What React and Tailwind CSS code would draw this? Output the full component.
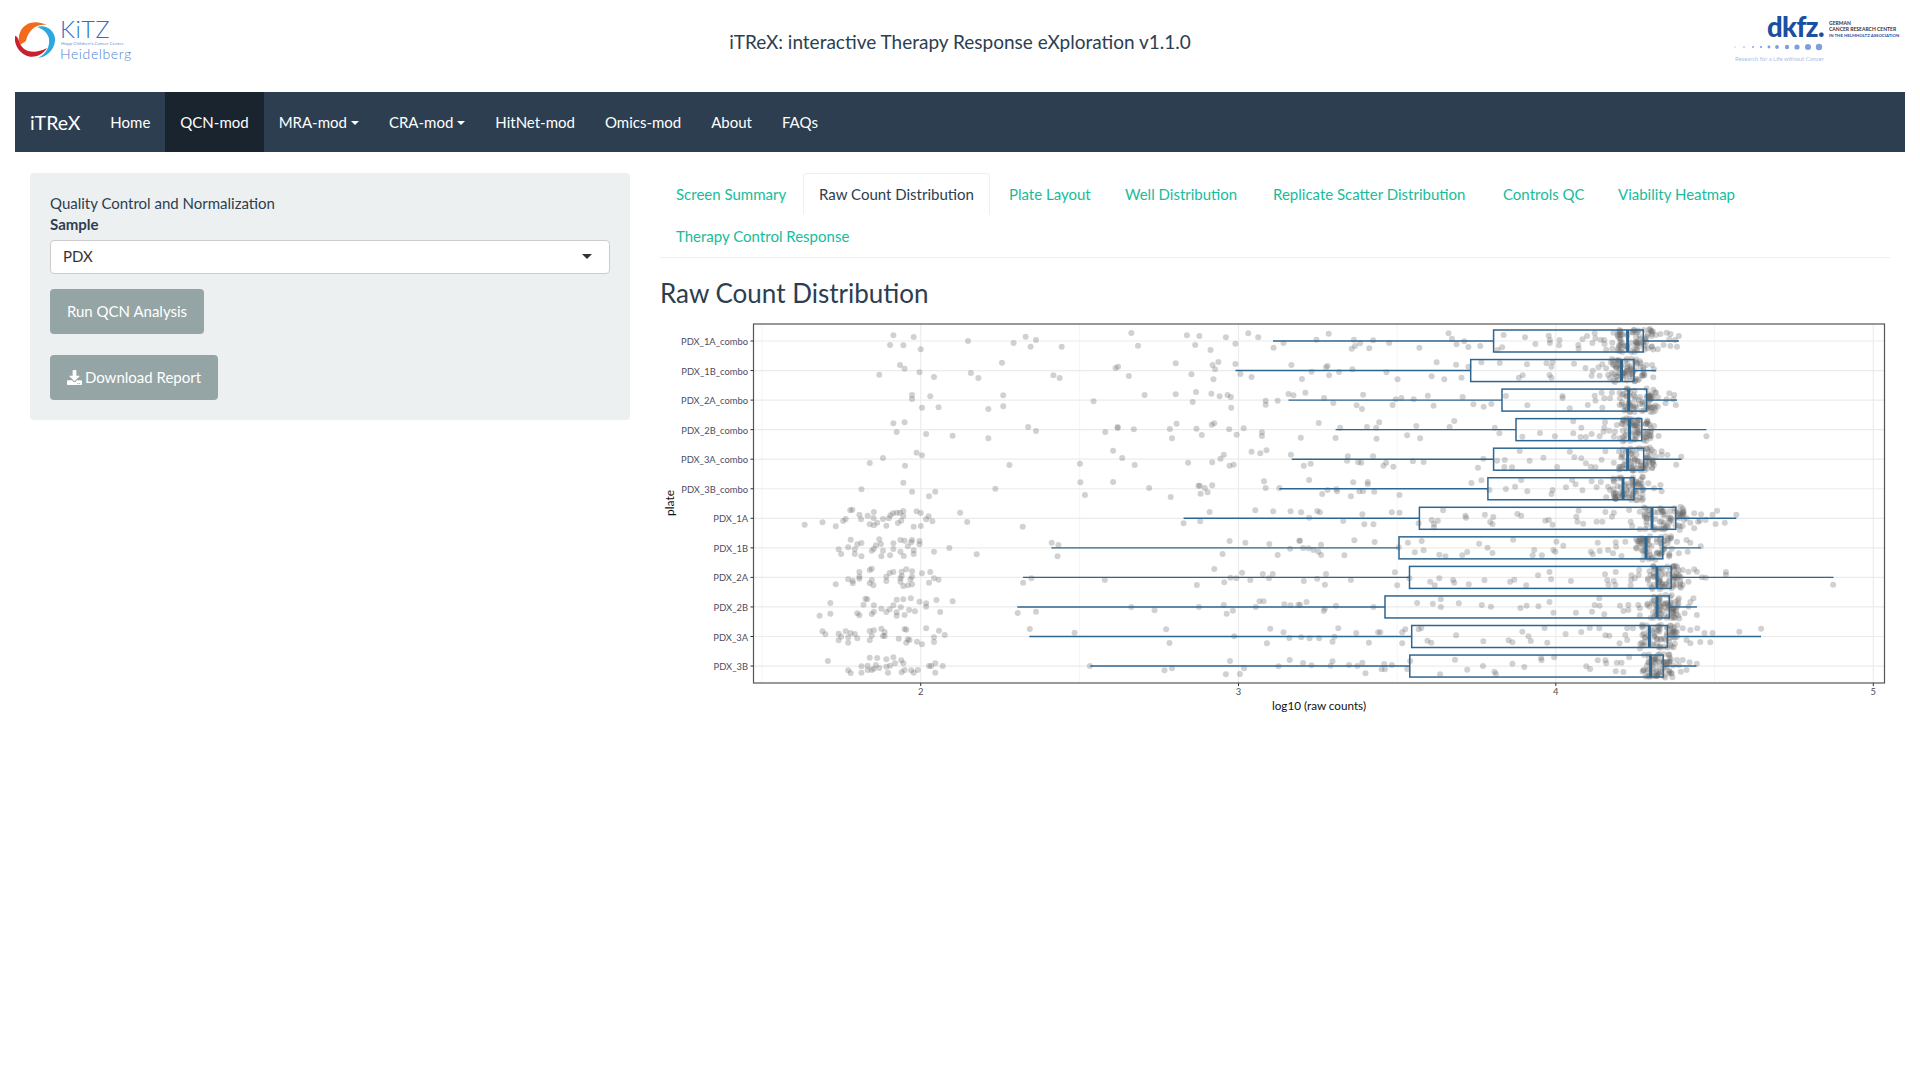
import { FaDownload } from 'react-icons/fa';

const NAV_ITEMS = [
  { label: 'Home' },
  { label: 'QCN-mod', active: true },
  { label: 'MRA-mod', caret: true },
  { label: 'CRA-mod', caret: true },
  { label: 'HitNet-mod' },
  { label: 'Omics-mod' },
  { label: 'About' },
  { label: 'FAQs' },
];

const TABS = [
  { label: 'Screen Summary', width: 'w-[141px]', gap: 'mr-[2px]' },
  { label: 'Raw Count Distribution', width: 'w-[187px]', gap: 'mr-[3px]', active: true },
  { label: 'Plate Layout', width: 'w-[114px]', gap: 'mr-[2px]' },
  { label: 'Well Distribution', width: 'w-[146px]', gap: 'mr-[2px]' },
  { label: 'Replicate Scatter Distribution', width: 'w-[228px]', gap: 'mr-[2px]' },
  { label: 'Controls QC', width: 'w-[113px]', gap: 'mr-[2px]' },
  { label: 'Viability Heatmap', width: 'w-[180px]', gap: 'mr-[2px]' },
  { label: 'Therapy Control Response', width: 'w-[204px]', gap: 'mr-[2px]' },
];

// plot frame, in page pixels
const PLOT = { left: 753.5, right: 1884.5, top: 324, bottom: 683 };
const TICKS = [
  { label: '2', x: 920.7 },
  { label: '3', x: 1238.5 },
  { label: '4', x: 1555.8 },
  { label: '5', x: 1873.3 },
];
const MINOR_TICKS = [761.9, 1079.6, 1397.2, 1714.5];

// left whisker end, q1, median, q3, right whisker end
const ROWS = [
  { name: 'PDX_1A_combo', box: [1273, 1493.6, 1627.6, 1643.3, 1678.9] },
  { name: 'PDX_1B_combo', box: [1235.4, 1470.7, 1621.5, 1634, 1656] },
  { name: 'PDX_2A_combo', box: [1288.5, 1502, 1628.7, 1646.7, 1677] },
  { name: 'PDX_2B_combo', box: [1335.6, 1516, 1629.5, 1641.8, 1706.4] },
  { name: 'PDX_3A_combo', box: [1291.8, 1493.6, 1627.6, 1643.7, 1681.5] },
  { name: 'PDX_3B_combo', box: [1279.4, 1487.9, 1623, 1634, 1662.4] },
  { name: 'PDX_1A', box: [1183.6, 1419.4, 1652, 1675.8, 1736.3] },
  { name: 'PDX_1B', box: [1051.3, 1399, 1646, 1662.8, 1700.7] },
  { name: 'PDX_2A', box: [1023, 1409.5, 1657, 1671.2, 1833.5] },
  { name: 'PDX_2B', box: [1017.3, 1385, 1657, 1669.3, 1697] },
  { name: 'PDX_3A', box: [1029.3, 1411.7, 1649.4, 1667.4, 1761] },
  { name: 'PDX_3B', box: [1090.3, 1409.8, 1650.6, 1663.2, 1696.5] },
];
const rowY = (i) => 341 + i * 29.55;

// jittered points read off the chart, two halves per block
const LEFT_TOP = [
  [587,76],[636,81],[579,105],[611,106],[653,118],[767,93],[877,99],[906,80],[931,90],[918,110],[993,110],[1161,69],[1177,107],[1295,76],[1325,78],[1315,105],[1352,120],[1389,82],[1412,101],[1443,70],[1467,82],[1504,113],[1528,99],
  [603,165],[614,176],[553,194],[650,187],[685,201],[774,189],[792,204],[849,158],[973,196],[988,204],[1123,174],[1129,170],[1155,198],[1268,160],[1306,193],[1357,165],[1371,156],[1363,178],[1359,208],[1412,162],[1424,192],[1451,201],[1547,165],
  [632,255],[632,267],[676,259],[656,293],[696,292],[852,256],[852,289],[816,297],[1070,274],[1193,255],[1268,253],[1309,276],[1317,246],[1354,251],[1374,259],[1393,255],[1401,261],[1402,293],[1485,272],[1485,284],[1514,272],[1540,252],[1552,256],
  [587,340],[614,337],[595,366],[666,372],[730,377],[816,385],[912,351],[931,363],[1098,366],[1128,351],[1128,354],[1167,358],[1254,357],[1270,341],[1259,385],[1318,356],[1331,375],[1355,344],[1361,340],[1397,358],[1432,355],[1415,374],[1476,367],[1476,378],
  [643,428],[656,436],[562,444],[530,459],[615,467],[867,465],[1037,461],[1117,422],[1139,444],[1169,465],[1298,458],[1356,457],[1384,434],[1376,446],[1398,467],[1408,464],[1451,425],[1472,430],[1487,421],[1546,434],
  [611,518],[510,538],[632,545],[688,545],[673,559],[833,536],[1038,517],[1117,516],[1049,555],[1204,534],[1256,561],[1323,527],[1326,527],[1338,534],[1356,526],[1328,551],[1345,547],[1481,514],[1485,534],[1518,534],
];
const LEFT_BOTTOM = [
  [373,74],[416,67],[448,79],[466,63],[472,57],[483,31],[488,29],[505,44],[509,58],[525,47],[540,36],[539,54],[530,73],[540,76],[548,68],[562,57],[576,55],[580,46],[586,40],[595,38],[603,38],[611,33],[611,48],[606,62],[598,69],[570,77],[636,80],[653,78],[643,34],[653,39],[672,49],[666,58],[681,64],[748,38],[765,66],[899,80],[1287,70],[1327,64],[1350,36],[1460,31],[1503,34],[1545,34],
  [455,148],[461,162],[478,142],[494,148],[494,162],[484,119],[500,133],[510,129],[510,169],[535,152],[540,146],[545,136],[557,132],[553,118],[562,152],[558,169],[579,166],[587,130],[587,147],[604,120],[614,122],[630,127],[632,120],[622,139],[650,123],[650,133],[636,151],[636,162],[604,155],[612,168],[685,155],[722,144],[788,163],[969,128],[985,135],[983,169],[1398,123],[1436,128],[1494,132],[1544,146],[1514,165],[1381,162],[1566,122],
  [448,253],[478,238],[489,242],[489,250],[505,216],[505,230],[505,236],[530,210],[535,206],[535,240],[530,250],[539,256],[570,243],[570,230],[578,219],[587,216],[607,215],[607,228],[604,235],[604,245],[611,258],[622,256],[632,253],[618,208],[632,214],[632,230],[628,238],[656,220],[676,216],[685,235],[696,239],[673,248],[900,248],[920,235],[1097,240],[1361,207],[1385,247],[1400,233],[1414,235],[1428,218],[1448,240],[1478,222],[1502,222],[1493,235],[1319,255],
  [409,347],[435,309],[435,341],[500,340],[505,346],[515,314],[520,296],[524,298],[540,316],[540,335],[535,342],[558,326],[570,336],[578,328],[587,316],[595,299],[611,298],[605,322],[595,337],[595,347],[614,345],[625,330],[639,334],[629,295],[650,305],[666,310],[666,320],[691,300],[700,336],[730,304],[887,339],[931,335],[1161,321],[1217,331],[1324,321],[1384,315],[1391,341],[1406,332],[1461,321],[1470,304],[1480,304],[1530,313],[1545,316],[1564,314],
  [416,394],[423,403],[455,401],[461,410],[455,421],[472,394],[478,412],[478,428],[484,399],[494,402],[500,415],[530,393],[540,391],[535,407],[530,421],[558,386],[566,396],[562,408],[566,408],[600,416],[614,387],[618,389],[622,418],[618,428],[626,420],[644,425],[656,433],[666,385],[697,392],[685,412],[685,426],[711,405],[916,387],[1024,398],[1245,388],[1253,429],[1409,409],[1488,430],[1496,386],[1528,397],[1542,414],
  [429,483],[478,511],[484,519],[510,499],[510,518],[525,497],[525,510],[530,473],[548,474],[545,495],[540,506],[535,510],[553,504],[570,478],[570,500],[579,497],[587,472],[591,490],[606,481],[611,490],[574,518],[607,517],[614,510],[630,511],[636,518],[646,510],[673,498],[678,498],[688,490],[688,518],[706,498],[1061,498],[1241,511],[1259,505],[1389,523],[1399,483],[1423,522],[1433,505],[1516,499],[1543,480],
];
const RIGHT_TOP = [
  [43,89],[75,71],[141,89],[157,100],[144,108],[135,116],[181,115],[191,91],[233,99],[312,113],[388,70],[397,86],[409,103],[429,94],[440,111],[471,108],[516,120],[528,112],[532,75],[588,82],[615,102],[650,77],[653,90],[653,99],[678,90],[677,106],[727,105],[728,116],[738,88],[750,78],[770,70],[772,85],[764,99],[786,90],[795,90],[796,102],[800,119],[816,98],[819,68],[835,75],[816,116],[838,98],[905,80],[918,78],[930,75],[942,72],[958,68],[968,72],[990,78],[965,88],[980,90],[950,105],[968,108],[985,110],[935,118],[918,110],
  [5,207],[30,185],[72,168],[68,172],[76,196],[102,186],[137,178],[226,187],[255,208],[344,199],[357,157],[377,208],[408,164],[422,203],[440,170],[474,157],[522,159],[572,203],[582,196],[593,163],[644,160],[660,156],[657,170],[652,195],[657,203],[716,161],[746,174],[762,197],[765,182],[780,172],[790,163],[800,175],[783,197],[805,195],[812,157],[820,165],[810,205],[890,160],[905,165],[920,165],[925,178],[900,195],[923,202],
  [14,248],[63,264],[87,279],[148,286],[165,254],[162,297],[242,285],[250,268],[265,264],[297,268],[334,257],[349,287],[425,261],[453,283],[480,290],[500,282],[538,258],[594,286],[686,258],[686,264],[705,295],[752,285],[770,257],[772,272],[788,248],[790,293],[795,265],[810,265],[815,248],[835,248],[835,285],[915,260],[930,248],[935,262],[935,290],[955,280],[965,250],[978,255],[958,268],[975,268],[982,285],
  [2,383],[49,339],[105,353],[93,384],[175,351],[199,353],[207,337],[200,386],[280,376],[304,348],[314,385],[391,351],[403,333],[509,353],[521,370],[581,380],[627,369],[666,379],[714,334],[735,353],[714,370],[733,381],[747,381],[762,372],[783,379],[797,337],[795,353],[793,365],[808,362],[823,365],[828,345],[820,380],[835,385],[925,348],[937,378],[915,385],[1062,379],
  [10,467],[28,461],[123,452],[125,439],[152,457],[160,458],[191,439],[218,467],[225,458],[244,470],[295,454],[323,456],[465,473],[479,446],[515,452],[535,450],[534,471],[554,472],[574,423],[600,452],[636,443],[672,471],[705,425],[717,442],[735,445],[747,460],[760,470],[772,472],[788,449],[798,424],[820,458],[835,470],[910,425],[925,425],[945,424],[930,440],[945,435],[960,435],[925,465],[996,440],[983,464],
  [24,510],[58,552],[72,540],[95,537],[97,544],[133,559],[139,517],[155,544],[165,544],[177,516],[177,523],[194,545],[260,555],[448,519],[474,511],[495,540],[538,537],[562,530],[594,544],[578,510],[660,540],[657,552],[695,532],[711,510],[720,523],[738,541],[762,514],[775,532],[786,516],[800,562],[805,530],[810,540],[825,548],[890,530],[910,520],[925,535],[942,525],[945,544],
];
const RIGHT_BOTTOM = [
  [3,37],[24,53],[45,33],[52,37],[113,63],[163,43],[168,73],[192,73],[240,37],[260,38],[310,70],[344,60],[360,62],[350,72],[350,82],[374,31],[432,47],[434,53],[483,44],[505,51],[497,66],[503,73],[568,42],[578,47],[641,62],[650,60],[660,74],[722,50],[728,32],[725,65],[740,71],[775,65],[790,65],[798,36],[815,50],[820,38],[860,30],[864,65],[868,78],[888,35],[888,88],[1000,40],[1010,55],[1020,68],[1030,40],[1048,43],[1040,65],[1045,62],[1060,60],[1078,44],[1090,32],[1086,72],[1110,68],[1140,44],[1030,85],[1000,78],
  [0,122],[8,144],[22,145],[35,150],[48,155],[55,134],[55,165],[116,166],[142,121],[195,126],[258,142],[282,128],[300,157],[318,123],[323,151],[364,164],[380,169],[424,166],[437,156],[468,131],[490,143],[503,159],[557,119],[612,150],[608,166],[632,166],[662,150],[670,125],[667,155],[688,137],[760,155],[765,163],[783,153],[778,128],[805,150],[825,127],[826,140],[818,160],[840,168],[850,125],[1010,120],[1020,128],[1013,155],[1047,139],[985,125],[990,160],
  [10,243],[45,236],[68,222],[65,254],[133,240],[248,217],[254,256],[286,235],[340,245],[352,256],[364,235],[400,240],[403,248],[441,253],[482,241],[549,245],[560,239],[591,256],[622,226],[652,216],[656,238],[708,243],[797,223],[825,216],[803,241],[820,243],[806,254],[824,254],[866,226],[865,240],[875,235],[864,256],[886,210],[885,225],[1000,210],[1015,215],[1030,208],[1037,215],[1015,245],[1000,255],[1050,232],[1060,233],[1113,216],[1113,224],[1393,254],
  [17,306],[0,314],[65,326],[62,333],[94,317],[192,321],[306,309],[347,311],[368,298],[368,321],[415,310],[475,315],[499,320],[576,324],[592,317],[623,319],[652,306],[662,338],[721,338],[763,335],[770,315],[782,295],[783,317],[795,343],[836,317],[845,333],[858,315],[858,330],[888,325],[884,315],[888,346],[1020,306],[1028,295],[1005,340],[1037,345],[1015,320],[990,295],
  [3,412],[25,415],[50,415],[85,425],[90,410],[100,385],[147,399],[180,428],[204,397],[210,397],[267,397],[275,388],[267,430],[310,388],[317,384],[333,422],[343,428],[408,406],[479,424],[545,421],[555,427],[581,395],[597,409],[603,423],[646,428],[639,384],[694,402],[735,396],[757,384],[782,385],[798,406],[808,407],[855,385],[850,405],[870,385],[855,420],[835,430],[985,395],[1000,385],[1020,390],[1038,385],[1010,420],[1020,430],[1046,426],[1057,399],[1072,427],[1078,399],[1148,395],[1205,386],[985,410],
  [8,489],[30,496],[80,497],[85,484],[128,495],[150,498],[163,488],[171,520],[213,508],[220,492],[222,508],[240,495],[280,507],[288,483],[366,523],[405,479],[437,509],[478,498],[508,515],[512,522],[555,491],[586,501],[630,474],[631,481],[664,472],[748,499],[758,507],[778,481],[798,481],[800,490],[825,514],[828,488],[840,488],[845,516],[860,472],[985,480],[1000,480],[1010,510],[1018,487],[1037,491],[995,515],[990,495],
];

function buildPoints() {
  const pts = [
    ...LEFT_TOP.map(([x, y]) => [650 + x / 2.412, 310 + y / 3]),
    ...LEFT_BOTTOM.map(([x, y]) => [650 + x / 2.412, 500 + y / 3]),
    ...RIGHT_TOP.map(([x, y]) => [1300 + x / 2.613, 310 + y / 3]),
    ...RIGHT_BOTTOM.map(([x, y]) => [1300 + x / 2.613, 500 + y / 3]),
  ];
  // dense cloud around the median, too tight to read one by one
  let seed = 17;
  const rand = () => {
    seed = (seed * 16807) % 2147483647;
    return seed / 2147483647;
  };
  ROWS.forEach((row, i) => {
    const [, , med, q3] = row.box;
    for (let n = 0; n < 68; n++) {
      const x = med - 10 + rand() * (q3 - med + 20);
      pts.push([x, rowY(i) - 12 + rand() * 24]);
    }
  });
  return pts;
}

const POINTS = buildPoints();

function KitzLogo() {
  return (
    <svg width="125" height="50" viewBox="15 14 125 50" className="block">
      <path d="M20 45 C15 30 28 16 47 25 C37 23 28 30 26 41 Z" fill="#f26a1b" />
      <path d="M37 27 C47 24 56 32 55 41 C54 50 47 57 38 58 C46 54 50 47 49 39 C48 33 43 29 37 27 Z" fill="#29a9e0" />
      <path d="M15 36 C17 36 18 38 19 41 C21 50 32 56 47 48 C42 56 32 59 25 55 C18 51 14 44 15 36 Z" fill="#c9202f" />
      <text x="60" y="38" fontSize="23.5" fontFamily="Lato, sans-serif" fontWeight="300" fill="#2f6fc4" letterSpacing="0.6">KiTZ</text>
      <text x="61" y="45" fontSize="4.6" fontFamily="Lato, sans-serif" fill="#6f93d8">Hopp Children's Cancer Center</text>
      <text x="60" y="59" fontSize="14" fontFamily="Lato, sans-serif" fontWeight="300" fill="#4f82cf" letterSpacing="0.6">Heidelberg</text>
    </svg>
  );
}

function DkfzLogo() {
  const dots = [
    [1735, 0.6], [1744, 0.7], [1753, 0.9], [1761, 1.1], [1769, 1.4], [1777, 1.9],
    [1787, 2.2], [1797, 2.6], [1808, 3], [1819, 3.2],
  ];
  return (
    <svg width="175" height="60" viewBox="1730 10 175 60" className="block">
      <text x="1767" y="37" fontSize="27.5" fontWeight="900" fontFamily="Lato, sans-serif" fill="#1a4fa3" letterSpacing="-0.6">dkfz.</text>
      <text x="1829" y="25" fontSize="5" fontWeight="700" fontFamily="Lato, sans-serif" fill="#333">GERMAN</text>
      <text x="1829" y="31" fontSize="5" fontWeight="700" fontFamily="Lato, sans-serif" fill="#333">CANCER RESEARCH CENTER</text>
      <text x="1829" y="37" fontSize="4.3" fontWeight="700" fontFamily="Lato, sans-serif" fill="#1a4fa3">IN THE HELMHOLTZ ASSOCIATION</text>
      {dots.map(([x, r]) => (
        <circle key={x} cx={x} cy="47" r={r} fill="#7f9fdc" />
      ))}
      <text x="1735" y="61" fontSize="5.9" fontFamily="Lato, sans-serif" fill="#a9bfe6">Research for a Life without Cancer</text>
    </svg>
  );
}

function RawCountPlot() {
  const { left, right, top, bottom } = PLOT;
  return (
    <svg width="1230" height="400" viewBox="660 320 1230 400" className="block mt-[12px]" fontFamily="Lato, sans-serif">
      {MINOR_TICKS.map((x) => (
        <line key={x} x1={x} x2={x} y1={top} y2={bottom} stroke="#f0f0f0" strokeWidth="0.7" />
      ))}
      {TICKS.map((t) => (
        <line key={t.label} x1={t.x} x2={t.x} y1={top} y2={bottom} stroke="#ebebeb" strokeWidth="1.1" />
      ))}
      {ROWS.map((row, i) => (
        <line key={row.name} x1={left} x2={right} y1={rowY(i)} y2={rowY(i)} stroke="#ebebeb" strokeWidth="1.2" />
      ))}

      {POINTS.map(([x, y], i) => (
        <circle key={i} cx={x} cy={y} r="3" fill="#666666" fillOpacity="0.3" />
      ))}

      {ROWS.map((row, i) => {
        const [lo, q1, med, q3, hi] = row.box;
        const y = rowY(i);
        return (
          <g key={row.name} stroke="#2f6690" fill="none">
            <line x1={lo} x2={q1} y1={y} y2={y} strokeWidth="1.4" />
            <line x1={q3} x2={hi} y1={y} y2={y} strokeWidth="1.4" />
            <rect x={q1} y={y - 11} width={q3 - q1} height="22" strokeWidth="1.5" />
            <line x1={med} x2={med} y1={y - 11} y2={y + 11} strokeWidth="3" />
          </g>
        );
      })}

      <rect x={left} y={top} width={right - left} height={bottom - top} fill="none" stroke="#555555" strokeWidth="1.2" />

      {ROWS.map((row, i) => (
        <g key={row.name}>
          <line x1={left - 3} x2={left} y1={rowY(i)} y2={rowY(i)} stroke="#333333" />
          <text x="748" y={rowY(i) + 4} textAnchor="end" fontSize="9.4" fill="#4d4d63">{row.name}</text>
        </g>
      ))}
      {TICKS.map((t) => (
        <g key={t.label}>
          <line x1={t.x} x2={t.x} y1={bottom} y2={bottom + 3} stroke="#333333" />
          <text x={t.x} y="695" textAnchor="middle" fontSize="9.4" fill="#4d4d4d">{t.label}</text>
        </g>
      ))}
      <text x="1319" y="710" textAnchor="middle" fontSize="11.7" fill="#111111">log10 (raw counts)</text>
      <text transform="translate(674 503) rotate(-90)" textAnchor="middle" fontSize="12" fill="#111111">plate</text>
    </svg>
  );
}

export default function App() {
  return (
    <div className="min-h-[1080px] bg-white px-[15px] font-['Lato','Liberation_Sans',sans-serif] text-[15px] leading-[21px] text-[#2c3e50]">
      <header className="grid h-[92px] grid-cols-[200px_1fr_200px] items-start">
        <div className="pt-[14px]">
          <KitzLogo />
        </div>
        <h4 className="pt-[29px] text-center text-[19px] leading-[26px] font-normal">
          iTReX: interactive Therapy Response eXploration v1.1.0
        </h4>
        <div className="flex justify-end pt-[10px]">
          <DkfzLogo />
        </div>
      </header>

      <nav className="flex h-[60px] items-stretch bg-[#2c3e50] text-white">
        <a className="flex items-center px-[15px] text-[19.5px]">iTReX</a>
        {NAV_ITEMS.map((item) => (
          <a
            key={item.label}
            className={`flex items-center gap-[4px] px-[15px] pt-px ${item.active ? 'bg-[#1a242f]' : ''}`}
          >
            {item.label}
            {item.caret && (
              <span className="mt-px h-0 w-0 border-x-4 border-t-4 border-x-transparent border-t-white" />
            )}
          </a>
        ))}
      </nav>

      <div className="flex items-start pt-[21px]">
        <aside className="ml-[15px] w-[600px] rounded bg-[#ecf0f1] p-5">
          <div>Quality Control and Normalization</div>
          <label className="block font-bold">Sample</label>
          <div className="mt-[5px] flex h-[34px] items-center justify-between rounded border border-[#cccccc] bg-white pr-[17px] pb-[2px] pl-[12px] text-[#333333]">
            <span>PDX</span>
            <span className="h-0 w-0 border-x-[5px] border-t-[5px] border-x-transparent border-t-[#333333]" />
          </div>
          <button className="mt-[15px] block h-[45px] w-[154px] rounded bg-[#95a5a6] text-white">
            Run QCN Analysis
          </button>
          <button className="mt-[21px] flex h-[45px] w-[168px] items-center justify-center gap-[3px] rounded bg-[#95a5a6] text-white">
            <FaDownload size={15} />
            Download Report
          </button>
        </aside>

        <main className="ml-[30px] w-[1230px]">
          <ul className="flex flex-wrap border-b border-[#ecf0f1]">
            {TABS.map((tab) => (
              <li key={tab.label} className={tab.gap}>
                <a
                  className={`block h-[42px] rounded-t border px-[15px] pt-[10px] whitespace-nowrap ${tab.width} ${
                    tab.active
                      ? 'border-[#ecf0f1] border-b-white text-[#2c3e50]'
                      : 'border-transparent text-[#18bc9c]'
                  }`}
                >
                  {tab.label}
                </a>
              </li>
            ))}
          </ul>
          <h3 className="mt-[21px] text-[26px] leading-[29px] font-normal">Raw Count Distribution</h3>
          <RawCountPlot />
        </main>
      </div>
    </div>
  );
}
